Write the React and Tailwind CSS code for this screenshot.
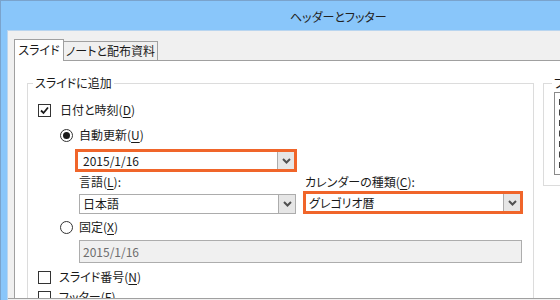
import React from "react";

const font = { fontFamily: '"Noto Sans CJK JP", "Noto Sans", sans-serif' };

const Chevron = () => (
  <svg width="9" height="6" viewBox="0 0 9 6">
    <path d="M1 1 L4.5 4.5 L8 1" fill="none" stroke="#505050" strokeWidth="2" />
  </svg>
);

const DropButton = () => (
  <div className="w-[17px] h-full bg-[#e6e6e6] border-l border-[#acacac] flex items-center justify-center">
    <Chevron />
  </div>
);

const Check = ({ checked }) => (
  <div className="w-[13px] h-[13px] border border-[#333] bg-white flex items-center justify-center shrink-0">
    {checked && (
      <svg width="9" height="9" viewBox="0 0 9 9">
        <path d="M1 4.5 L3.5 7 L8 1.5" fill="none" stroke="#1a1a1a" strokeWidth="1.8" />
      </svg>
    )}
  </div>
);

const Radio = ({ on }) => (
  <div className="w-[13px] h-[13px] rounded-full border border-[#333] bg-white flex items-center justify-center shrink-0">
    {on && <div className="w-[7px] h-[7px] rounded-full bg-[#1a1a1a]" />}
  </div>
);

const Key = ({ k }) => (
  <>
    (<span className="underline underline-offset-2">{k}</span>)
  </>
);

export default function App() {
  return (
    <div
      className="w-[560px] h-[300px] overflow-hidden bg-[#89c6fa] border-t border-l border-[#7aa3cc] flex flex-col text-[12px] text-[#1a1a1a] leading-[16px] [font-feature-settings:'palt']"
      style={font}
    >
      <div className="h-[29px] shrink-0 flex items-center pl-[289px] pt-[2px] text-[#222]">
        ヘッダーとフッター
      </div>
      <div className="ml-[6px] flex-1 bg-[#f0f0f0] border-t border-l border-[#b9d5ef] flex flex-col min-h-0">
        <div className="h-[268px] overflow-hidden border-b border-[#a0a0a0] flex flex-col">
          <div className="pt-[8px] pl-[6px] flex items-end shrink-0">
            <div className="relative z-10 -mb-px w-[50px] h-[22px] bg-white border-l border-t border-r border-[#a0a0a0] flex items-center justify-center pb-[2px]">
              スライド
            </div>
            <div className="w-[94px] h-[19px] border-t border-r border-[#a0a0a0] flex items-center justify-center">
              ノートと配布資料
            </div>
          </div>
          <div className="flex-1 bg-white border-l border-t border-[#a0a0a0] ml-[6px] pl-[12px] pt-[22px] flex gap-[9px]">
            <div className="w-[507px] shrink-0 border border-[#dcdcdc] flex flex-col h-[300px]">
              <div className="-mt-[9px] ml-[5px] px-[2px] bg-white w-fit h-[16px]">スライドに追加</div>

              <div className="mt-[11px] h-[16px] pl-[10px] flex items-center gap-[9px]">
                <Check checked />
                <span>
                  日付と時刻<Key k="D" />
                </span>
              </div>

              <div className="mt-[9px] h-[16px] pl-[32px] flex items-center gap-[6px]">
                <Radio on />
                <span>
                  自動更新<Key k="U" />
                </span>
              </div>

              <div className="mt-[6px] ml-[47px] w-[222px] h-[23px] border-[3px] border-[#f0652a] bg-white flex">
                <div className="flex-1 pl-[5px] flex items-center">2015/1/16</div>
                <DropButton />
              </div>

              <div className="mt-[2px] ml-[51px] flex gap-[7px]">
                <div className="w-[217px] flex flex-col">
                  <div className="h-[16px]">
                    言語<Key k="L" />:
                  </div>
                  <div className="mt-[4px] h-[20px] border border-[#acacac] bg-white flex">
                    <div className="flex-1 pl-[3px] flex items-center">日本語</div>
                    <DropButton />
                  </div>
                </div>
                <div className="w-[220px] flex flex-col">
                  <div className="h-[16px] pl-[2px]">
                    カレンダーの種類<Key k="C" />:
                  </div>
                  <div className="mt-[1px] h-[23px] border-[3px] border-[#f0652a] bg-white flex">
                    <div className="flex-1 pl-[3px] flex items-center">グレゴリオ暦</div>
                    <DropButton />
                  </div>
                </div>
              </div>

              <div className="mt-[5px] h-[16px] pl-[32px] flex items-center gap-[6px]">
                <Radio />
                <span>
                  固定<Key k="X" />
                </span>
              </div>

              <div className="mt-[5px] ml-[51px] w-[443px] h-[23px] border border-[#adadad] bg-[#f0f0f0] flex items-center pl-[3px] text-[#6d6d6d]">
                2015/1/16
              </div>

              <div className="mt-[6px] h-[16px] pl-[10px] flex items-center gap-[8px]">
                <Check />
                <span>
                  スライド番号<Key k="N" />
                </span>
              </div>

              <div className="mt-[4px] h-[16px] pl-[10px] flex items-center gap-[8px]">
                <Check />
                <span>
                  フッター<Key k="F" />
                </span>
              </div>
            </div>

            <div className="w-[120px] shrink-0 h-[103px] border border-[#dcdcdc] flex flex-col">
              <div className="-mt-[9px] ml-[8px] px-[2px] bg-white w-fit h-[16px]">プレビュー</div>
              <div className="mt-[1px] ml-[10px] h-[83px] border border-[#8a8a8a] bg-white pl-[4px] py-[6px]">
                <div className="h-full border-l-2 border-dashed border-[#444]" />
              </div>
            </div>
          </div>
        </div>
      </div>
    </div>
  );
}
